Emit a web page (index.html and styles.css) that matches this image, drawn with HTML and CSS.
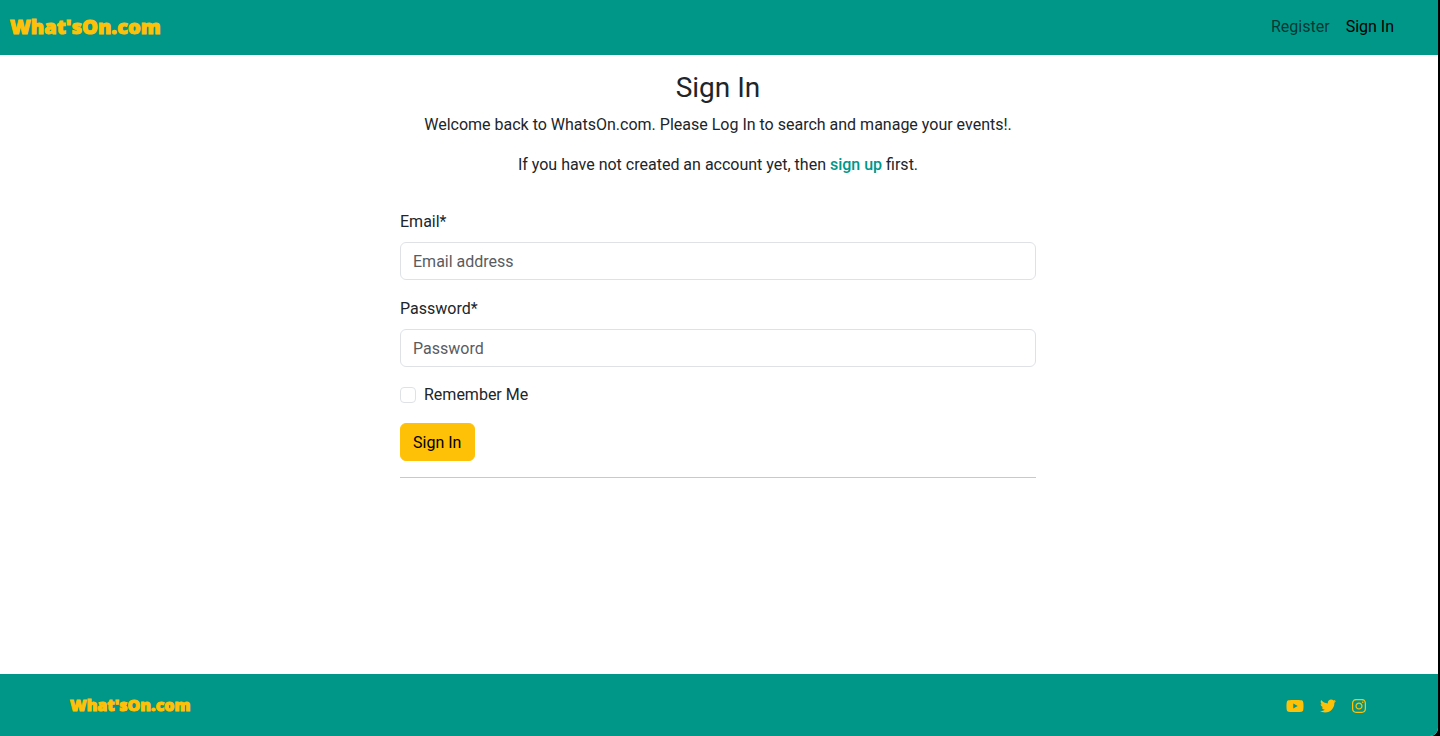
FILE: index.html
```
<!DOCTYPE html>
<html lang="en">
<head>
<meta charset="utf-8">
<meta name="viewport" content="width=device-width, initial-scale=1">
<title>Sign In</title>
<link rel="stylesheet" href="styles.css">
</head>
<body>
<div class="page">
  <header class="navbar">
    <a class="brand" href="#">What'sOn.com</a>
    <nav class="nav">
      <a class="nav-link" href="#">Register</a>
      <a class="nav-link active" href="#">Sign In</a>
    </nav>
  </header>
  <main class="main">
    <section class="intro">
      <h1 class="title">Sign In</h1>
      <p class="text">Welcome back to WhatsOn.com. Please Log In to search and manage your events!.</p>
      <p class="text">If you have not created an account yet, then <a class="link" href="#">sign up</a> first.</p>
    </section>
    <form class="form">
      <div class="field">
        <label class="label" for="email">Email*</label>
        <input class="input" id="email" type="email" placeholder="Email address">
      </div>
      <div class="field">
        <label class="label" for="password">Password*</label>
        <input class="input" id="password" type="password" placeholder="Password">
      </div>
      <div class="check">
        <input class="checkbox" id="remember" type="checkbox">
        <label class="check-label" for="remember">Remember Me</label>
      </div>
      <button class="button" type="submit">Sign In</button>
      <hr class="rule">
    </form>
  </main>
  <footer class="footer">
    <div class="footer-inner">
      <a class="brand brand-small" href="#">What'sOn.com</a>
      <div class="social">
        <a href="#" aria-label="YouTube"><svg width="18" height="16" viewBox="0 0 576 512"><path d="M549.7 124.1c-6.3-23.7-24.8-42.3-48.3-48.6C458.800 64 288 64 288 64S117.200 64 74.600 75.500c-23.500 6.300-42 24.900-48.300 48.600-11.400 42.900-11.400 132.300-11.400 132.300s0 89.400 11.400 132.300c6.300 23.700 24.800 41.500 48.300 47.800C117.200 448 288 448 288 448s170.800 0 213.400-11.500c23.500-6.300 42-24.200 48.300-47.800 11.400-42.900 11.400-132.300 11.400-132.300s0-89.400-11.400-132.300zM232.200 337.600V175.200l142.700 81.200z"/></svg></a>
        <a href="#" aria-label="Twitter"><svg width="16" height="16" viewBox="0 0 512 512"><path d="M459.370 151.716c.325 4.548.325 9.097.325 13.645 0 138.720-105.583 298.558-298.558 298.558-59.452 0-114.680-17.219-161.137-47.106 8.447.974 16.568 1.299 25.340 1.299 49.055 0 94.213-16.568 130.274-44.832-46.132-.975-84.792-31.188-98.112-72.772 6.498.974 12.995 1.624 19.818 1.624 9.421 0 18.843-1.300 27.614-3.573-48.081-9.747-84.143-51.980-84.143-102.985v-1.299c13.969 7.797 30.214 12.670 47.431 13.319-28.264-18.843-46.781-51.005-46.781-87.391 0-19.492 5.197-37.360 14.294-52.954 51.655 63.675 129.300 105.258 216.365 109.807-1.624-7.797-2.599-15.918-2.599-24.040 0-57.828 46.782-104.934 104.934-104.934 30.213 0 57.502 12.670 76.670 33.137 23.715-4.548 46.456-13.320 66.599-25.340-7.798 24.366-24.366 44.833-46.132 57.827 21.117-2.273 41.584-8.122 60.426-16.243-14.292 20.791-32.161 39.308-52.628 54.253z"/></svg></a>
        <a href="#" aria-label="Instagram"><svg width="14" height="16" viewBox="0 0 448 512"><path d="M224.100 141c-63.600 0-114.900 51.300-114.900 114.900s51.300 114.900 114.900 114.900S339 319.500 339 255.900 287.700 141 224.100 141zm0 189.600c-41.100 0-74.700-33.500-74.700-74.700s33.500-74.700 74.700-74.700 74.700 33.500 74.700 74.700-33.600 74.700-74.700 74.700zm146.400-194.300c0 14.900-12 26.800-26.800 26.800-14.900 0-26.800-12-26.800-26.800s12-26.800 26.800-26.800 26.800 12 26.800 26.800zm76.100 27.200c-1.700-35.900-9.900-67.700-36.200-93.900-26.200-26.200-58-34.400-93.900-36.200-37-2.100-147.900-2.100-184.900 0-35.800 1.700-67.600 9.900-93.900 36.100s-34.400 58-36.200 93.900c-2.100 37-2.100 147.900 0 184.900 1.700 35.900 9.900 67.700 36.200 93.900s58 34.400 93.900 36.200c37 2.100 147.900 2.100 184.900 0 35.900-1.700 67.700-9.900 93.900-36.200 26.200-26.200 34.400-58 36.200-93.900 2.100-37 2.100-147.800 0-184.800zM398.800 388c-7.800 19.600-22.900 34.700-42.600 42.600-29.500 11.700-99.500 9-132.100 9s-102.700 2.600-132.100-9c-19.600-7.800-34.700-22.900-42.600-42.600-11.700-29.500-9-99.500-9-132.100s-2.600-102.700 9-132.100c7.800-19.600 22.900-34.700 42.600-42.600 29.500-11.700 99.500-9 132.100-9s102.700-2.600 132.100 9c19.600 7.800 34.700 22.900 42.600 42.600 11.700 29.500 9 99.500 9 132.100s2.700 102.700-9 132.100z"/></svg></a>
      </div>
    </div>
  </footer>
</div>
</body>
</html>
```
FILE: styles.css
```
* { box-sizing: border-box; }
html { background: #000; }
body {
  margin: 0;
  font: 16px/24px Roboto, sans-serif;
  color: #212529;
}
.page {
  display: flex;
  flex-direction: column;
  min-height: 100vh;
  margin-right: 2px;
  background: #fff;
  border-bottom-right-radius: 8px;
  overflow: hidden;
}
.navbar {
  display: flex;
  align-items: center;
  justify-content: space-between;
  padding: 7px 44px 8px 10px;
  background: #009688;
}
.brand {
  font: 900 20px/40px "Open Sans", sans-serif;
  color: #ffc107;
  -webkit-text-stroke: 1px #ffc107;
  text-decoration: none;
}
.brand-small { font-size: 16px; line-height: 30px; }
.nav { display: flex; gap: 16px; }
.nav-link { color: rgba(0, 0, 0, .65); text-decoration: none; }
.nav-link.active { color: #000; }
.main {
  flex: 1;
  width: 100%;
  max-width: 662px;
  margin: 0 auto;
  padding: 16px 14px 16px 12px;
}
.intro { text-align: center; }
.title { margin: 0 0 8px; font-size: 28px; line-height: 34px; font-weight: 400; }
.text { margin: 0 0 16px; }
.link { color: #009688; font-weight: 500; text-decoration: none; }
.form { padding-top: 16px; }
.field { margin-bottom: 16px; }
.label { display: block; padding-top: 1px; margin: 0 0 8px; }
.input {
  display: block;
  width: 100%;
  padding: 7px 12px 5px;
  border: 1px solid #dee2e6;
  border-radius: 6px;
  background: #fff;
  color: #212529;
  font: 16px/24px Roboto, sans-serif;
}
.input::placeholder { color: #595c5f; opacity: 1; }
.check { display: flex; align-items: center; gap: 8px; margin-bottom: 16px; }
.checkbox {
  appearance: none;
  width: 16px;
  height: 16px;
  margin: 0;
  border: 1px solid #dee2e6;
  border-radius: 4px;
}
.checkbox:checked { background: #009688; }
.button {
  display: block;
  padding: 7px 13px 5px 12px;
  border: 1px solid #ffc107;
  border-radius: 6px;
  background: #ffc107;
  color: #000;
  font: 16px/24px Roboto, sans-serif;
}
.rule { margin: 16px 0; border: 0; border-top: 1px solid #c8c9ca; }
.footer { padding: 16px 2px 16px 0; background: #009688; }
.footer-inner {
  display: flex;
  align-items: center;
  justify-content: space-between;
  max-width: 1320px;
  margin: 0 auto;
  padding: 0 12px;
}
.social { display: flex; gap: 16px; padding-top: 2px; }
.social a { display: flex; }
.social svg { fill: #ffc107; }
```
